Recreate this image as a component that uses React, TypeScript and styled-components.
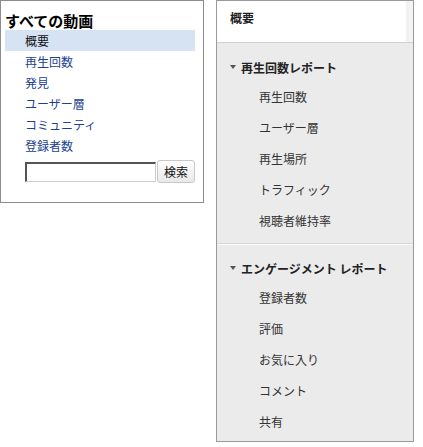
import React from "react";
import styled, { createGlobalStyle } from "styled-components";

const Global = createGlobalStyle`
  html, body { margin: 0; padding: 0; background: #fff; }
  body { font-family: "Noto Sans CJK JP", "Noto Sans", sans-serif; }
`;

const Page = styled.div`
  display: flex;
  align-items: flex-start;
  gap: 12px;
`;

/* ---------- left: video filter box ---------- */
const FilterBox = styled.div`
  box-sizing: border-box;
  width: 204px;
  height: 203px;
  border: 1px solid #8c8c8c;
  padding: 10px 8px 0 4px;
`;

const FilterTitle = styled.div`
  font-size: 15px;
  font-weight: bold;
  line-height: 19px;
  color: #000;
`;

const FilterList = styled.ul`
  list-style: none;
  margin: 0;
  padding: 0;
`;

const FilterItem = styled.li<{ $active?: boolean }>`
  height: 21px;
  line-height: 21px;
  padding-left: 20px;
  font-size: 12px;
  color: ${(p) => (p.$active ? "#111" : "#1c3f8f")};
  background: ${(p) => (p.$active ? "#d5e3f2" : "transparent")};
`;

const SearchRow = styled.form`
  display: flex;
  align-items: center;
  gap: 1px;
  margin: 4px 0 0 20px;
`;

const SearchInput = styled.input`
  box-sizing: border-box;
  width: 131px;
  height: 20px;
  margin: 0;
  border-style: solid;
  border-width: 2px 1px 1px 2px;
  border-color: #555 #ccc #ccc #555;
  background: #fff;
`;

const SearchButton = styled.button`
  box-sizing: border-box;
  width: 38px;
  height: 23px;
  padding: 0;
  border: 1px solid #c8c8c8;
  border-radius: 3px;
  background: linear-gradient(#ffffff, #e9e9e9);
  font-family: "Noto Sans CJK JP", sans-serif;
  font-size: 12px;
  color: #111;
`;

/* ---------- right: report navigation ---------- */
const ReportNav = styled.nav`
  box-sizing: border-box;
  width: 198px;
  height: 442px;
  border: 1px solid #9a9a9a;
  background: #ebebeb;
  overflow: hidden;
`;

const NavHeader = styled.div`
  height: 42px;
  background: linear-gradient(to right, #fff 0, #fff 188px, #f0f0f0 190px, #f6f6f6 196px);
  border-bottom: 1px solid #d0d0d0;
  box-sizing: border-box;
  padding-left: 13px;
  line-height: 34px;
  font-size: 12px;
  font-weight: bold;
  color: #222;
`;

const Section = styled.div<{ $divided?: boolean }>`
  padding: 12px 0 7px;
  border-top: ${(p) => (p.$divided ? "1px solid #d6d6d6" : "none")};
  box-shadow: ${(p) => (p.$divided ? "inset 0 1px 0 #fafafa" : "none")};
`;

const SectionHeading = styled.div`
  display: flex;
  align-items: center;
  gap: 5px;
  height: 24px;
  margin-bottom: 2px;
  padding-left: 13px;
  font-size: 12px;
  font-weight: bold;
  color: #222;
`;

const Caret = styled.span`
  width: 0;
  height: 0;
  border-left: 3px solid transparent;
  border-right: 3px solid transparent;
  border-top: 4px solid #555;
`;

const NavItem = styled.div`
  height: 31px;
  line-height: 31px;
  padding-left: 42px;
  font-size: 12px;
  color: #333;
`;

const sidebar = ["概要", "再生回数", "発見", "ユーザー層", "コミュニティ", "登録者数"];

const sections = [
  { title: "再生回数レポート", items: ["再生回数", "ユーザー層", "再生場所", "トラフィック", "視聴者維持率"] },
  { title: "エンゲージメント レポート", items: ["登録者数", "評価", "お気に入り", "コメント", "共有"] },
];

export default function App() {
  return (
    <>
      <Global />
      <Page>
        <FilterBox>
          <FilterTitle>すべての動画</FilterTitle>
          <FilterList>
            {sidebar.map((label, i) => (
              <FilterItem key={label} $active={i === 0}>
                {label}
              </FilterItem>
            ))}
          </FilterList>
          <SearchRow onSubmit={(e) => e.preventDefault()}>
            <SearchInput type="text" />
            <SearchButton type="submit">検索</SearchButton>
          </SearchRow>
        </FilterBox>
        <ReportNav>
          <NavHeader>概要</NavHeader>
          {sections.map((s, i) => (
            <Section key={s.title} $divided={i > 0}>
              <SectionHeading>
                <Caret />
                {s.title}
              </SectionHeading>
              {s.items.map((it) => (
                <NavItem key={it}>{it}</NavItem>
              ))}
            </Section>
          ))}
        </ReportNav>
      </Page>
    </>
  );
}
